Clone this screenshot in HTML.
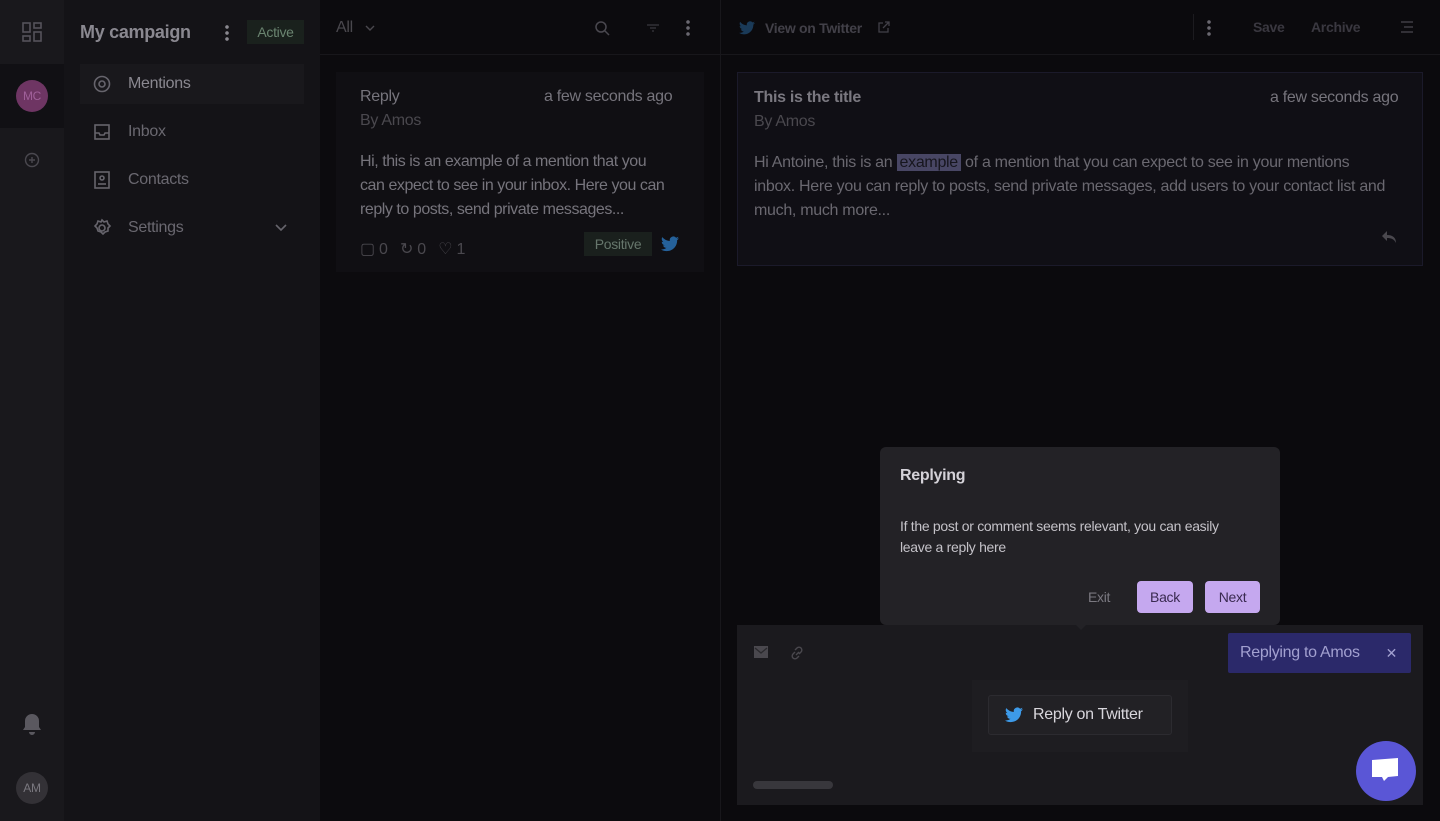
<!DOCTYPE html><html><head><style>
*{box-sizing:border-box;margin:0;padding:0}
body{width:1440px;height:821px;overflow:hidden;background:#0b0a0d;font-family:"Liberation Sans",sans-serif;position:relative;color:#8a8890;letter-spacing:-0.3px}
.a{position:absolute;white-space:nowrap}
.w{white-space:normal}
</style></head><body>
<div class="a" style="left:0;top:0;width:64px;height:821px;background:#19181c"></div>
<div class="a" style="left:0;top:64px;width:64px;height:64px;background:#111014"></div>
<svg class="a" style="left:22px;top:22px" width="20" height="20" viewBox="0 0 20 20" fill="none" stroke="#55535a" stroke-width="1.6"><rect x="1" y="1" width="7" height="9"/><rect x="12" y="1" width="7" height="5"/><rect x="1" y="14" width="7" height="5"/><rect x="12" y="10" width="7" height="9"/></svg>
<div class="a" style="left:16px;top:80px;width:32px;height:32px;border-radius:50%;background:#6e3563;color:#a0609a;font-size:12px;line-height:32px;text-align:center">MC</div>
<svg class="a" style="left:24px;top:152px" width="16" height="16" viewBox="0 0 16 16" fill="none" stroke="#4a484f" stroke-width="1.4"><circle cx="8" cy="8" r="6.5"/><path d="M8 5v6M5 8h6"/></svg>
<svg class="a" style="left:21px;top:713px" width="22" height="24" viewBox="0 0 22 24" fill="#5a585f"><path d="M11 1a7 7 0 0 0-7 7v6l-2 3h18l-2-3V8a7 7 0 0 0-7-7zM8 19a3 3 0 0 0 6 0z"/></svg>
<div class="a" style="left:16px;top:772px;width:32px;height:32px;border-radius:50%;background:#333136;color:#7a787f;font-size:12px;line-height:32px;text-align:center">AM</div>

<div class="a" style="left:64px;top:0;width:256px;height:821px;background:#141317"></div>
<div class="a" style="left:80px;top:22px;font-size:18px;font-weight:bold;color:#8a8890">My campaign</div>
<div class="a" style="left:225px;top:24px;width:4px;height:18px;background:radial-gradient(circle,#8a888f 1.6px,transparent 2px) 0 0/4px 6px"></div>
<div class="a" style="left:247px;top:20px;width:57px;height:24px;background:#1a211d;color:#6a8470;font-size:14px;line-height:24px;text-align:center">Active</div>
<div class="a" style="left:80px;top:64px;width:224px;height:40px;background:#19181c"></div>
<div class="a" style="left:128px;top:75px;font-size:16px;color:#8a8890">Mentions</div>
<div class="a" style="left:128px;top:123px;font-size:16px;color:#6a6870">Inbox</div>
<div class="a" style="left:128px;top:171px;font-size:16px;color:#6a6870">Contacts</div>
<div class="a" style="left:128px;top:219px;font-size:16px;color:#6a6870">Settings</div>
<svg class="a" style="left:92px;top:75px" width="200" height="170" fill="none" stroke="#66646c" stroke-width="1.6"><circle cx="10" cy="9" r="7.5"/><circle cx="10" cy="9" r="3"/><rect x="3" y="50" width="14" height="14"/><path d="M3 58h4l1 2h4l1-2h4"/><rect x="3" y="97" width="14" height="16"/><circle cx="10" cy="103" r="2"/><path d="M6 109h8"/><circle cx="10" cy="153" r="3"/><path d="M10 145l2 2 3-1 1 3 2 2-2 2 0 3-3 1-2 2-2-2-3-1-1-3-2-2 2-2 1-3 3 1z"/><path d="M184 150l5 5 5-5"/></svg>

<div class="a" style="left:320px;top:0;width:400px;height:821px;background:#0c0b0e"></div>
<div class="a" style="left:320px;top:54px;width:400px;height:1px;background:#18171b"></div>
<div class="a" style="left:336px;top:19px;font-size:16px;color:#4a484e">All</div>
<svg class="a" style="left:365px;top:24px" width="10" height="8" fill="none" stroke="#4a484e" stroke-width="1.4"><path d="M1 2l4 4 4-4"/></svg>
<svg class="a" style="left:594px;top:20px" width="16" height="16" fill="none" stroke="#4a484f" stroke-width="1.5"><circle cx="7" cy="7" r="5"/><path d="M11 11l4 4"/></svg>
<svg class="a" style="left:646px;top:23px" width="14" height="10" fill="none" stroke="#3a383e" stroke-width="1.2"><path d="M1 2h12M4 5h6M6 8h2"/></svg>
<div class="a" style="left:686px;top:19px;width:4px;height:18px;background:radial-gradient(circle,#6a6870 1.6px,transparent 2px) 0 0/4px 6px"></div>
<div class="a" style="left:336px;top:72px;width:368px;height:200px;background:#100f13"></div>
<div class="a" style="left:360px;top:88px;font-size:16px;color:#76747c">Reply</div>
<div class="a" style="left:544px;top:88px;font-size:16px;color:#76747c">a few seconds ago</div>
<div class="a" style="left:360px;top:112px;font-size:16px;color:#4a484e">By Amos</div>
<div class="a w" style="left:360px;top:150px;width:308px;font-size:16px;line-height:24px;color:#76747c;letter-spacing:-0.45px">Hi, this is an example of a mention that you can expect to see in your inbox. Here you can reply to posts, send private messages...</div>
<div class="a" style="left:360px;top:239px;font-size:16px;color:#4a484e">▢ 0 &nbsp; ↻ 0 &nbsp; ♡ 1</div>
<div class="a" style="left:584px;top:232px;width:68px;height:24px;background:#1a201d;color:#66766c;font-size:14px;line-height:24px;text-align:center">Positive</div>
<svg class="a" style="left:661px;top:236px" width="18" height="16" viewBox="0 0 24 20"><path fill="#25619a" d="M24 2.3a10 10 0 0 1-2.8.8A5 5 0 0 0 23.3.4a10 10 0 0 1-3.1 1.2A4.9 4.9 0 0 0 11.8 6 14 14 0 0 1 1.7.9a4.9 4.9 0 0 0 1.5 6.6A4.9 4.9 0 0 1 1 6.9a4.9 4.9 0 0 0 3.9 4.8 5 5 0 0 1-2.2.1 4.9 4.9 0 0 0 4.6 3.4A9.9 9.9 0 0 1 0 17.3 14 14 0 0 0 7.5 19.5c9.1 0 14-7.5 14-14v-.6A10 10 0 0 0 24 2.3z"/></svg>

<div class="a" style="left:720px;top:0;width:1px;height:821px;background:#18171b"></div>
<div class="a" style="left:721px;top:54px;width:719px;height:1px;background:#18171b"></div>
<svg class="a" style="left:739px;top:21px" width="16" height="14" viewBox="0 0 24 20"><path fill="#1a3a58" d="M24 2.3a10 10 0 0 1-2.8.8A5 5 0 0 0 23.3.4a10 10 0 0 1-3.1 1.2A4.9 4.9 0 0 0 11.8 6 14 14 0 0 1 1.7.9a4.9 4.9 0 0 0 1.5 6.6A4.9 4.9 0 0 1 1 6.9a4.9 4.9 0 0 0 3.9 4.8 5 5 0 0 1-2.2.1 4.9 4.9 0 0 0 4.6 3.4A9.9 9.9 0 0 1 0 17.3 14 14 0 0 0 7.5 19.5c9.1 0 14-7.5 14-14v-.6A10 10 0 0 0 24 2.3z"/></svg>
<div class="a" style="left:765px;top:20px;font-size:14px;font-weight:bold;color:#424048">View on Twitter</div>
<svg class="a" style="left:878px;top:21px" width="12" height="12" fill="none" stroke="#424048" stroke-width="1.3"><path d="M5 2H1v9h9V7M7 1h4v4M11 1L5 7"/></svg>
<div class="a" style="left:1193px;top:14px;width:1px;height:26px;background:#1c1b1f"></div>
<div class="a" style="left:1207px;top:19px;width:4px;height:18px;background:radial-gradient(circle,#6a6870 1.6px,transparent 2px) 0 0/4px 6px"></div>
<div class="a" style="left:1253px;top:19px;font-size:14px;font-weight:bold;color:#3a3840">Save</div>
<div class="a" style="left:1311px;top:19px;font-size:14px;font-weight:bold;color:#3a3840">Archive</div>
<svg class="a" style="left:1401px;top:21px" width="12" height="12" fill="none" stroke="#4a484f" stroke-width="1.2"><path d="M0 1h12M3 6h9M0 11h12"/></svg>
<div class="a" style="left:737px;top:72px;width:686px;height:194px;background:#100f15;border:1px solid #1b1a2a"></div>
<div class="a" style="left:754px;top:89px;font-size:16px;font-weight:bold;color:#7a7880">This is the title</div>
<div class="a" style="left:1270px;top:89px;font-size:16px;color:#76747c">a few seconds ago</div>
<div class="a" style="left:754px;top:113px;font-size:16px;color:#4a484e">By Amos</div>
<div class="a w" style="left:754px;top:151px;width:640px;font-size:16px;line-height:24px;color:#6a6870;letter-spacing:-0.3px">Hi Antoine, this is an <span style="background:#484664;color:#17161e;padding:0 3px">example</span> of a mention that you can expect to see in your mentions inbox. Here you can reply to posts, send private messages, add users to your contact list and much, much more...</div>
<svg class="a" style="left:1381px;top:230px" width="16" height="14" viewBox="0 0 16 14"><path fill="#4a484e" d="M6 1L1 6l5 5V8c4 0 7 1 9 5 0-5-3-8-9-8z"/></svg>

<div class="a" style="left:737px;top:625px;width:686px;height:180px;background:#1b1a1e"></div>
<svg class="a" style="left:754px;top:646px" width="14" height="12"><rect width="14" height="12" fill="#4a484e"/><path d="M1 2l6 5 6-5" fill="none" stroke="#2a292d" stroke-width="1.3"/></svg>
<svg class="a" style="left:790px;top:645px" width="14" height="16" fill="none" stroke="#4a484e" stroke-width="1.4"><path d="M6 10l3-3M5 7l-2 2a2.5 2.5 0 0 0 4 4l2-2M9 9l2-2a2.5 2.5 0 0 0-4-4L5 5"/></svg>
<div class="a" style="left:1228px;top:633px;width:183px;height:40px;background:#2b296a;border-radius:2px;color:#a2a0d0;font-size:16px;line-height:40px;padding-left:12px">Replying to Amos<span style="position:absolute;right:14px;font-size:14px">✕</span></div>
<div class="a" style="left:972px;top:680px;width:216px;height:72px;background:#1e1d21"></div>
<div class="a" style="left:988px;top:695px;width:184px;height:40px;background:#222125;border:1px solid #2c2b30;border-radius:3px;color:#d8d6dc;font-size:16px;line-height:38px;padding-left:44px">Reply on Twitter</div>
<svg class="a" style="left:1005px;top:707px" width="18" height="16" viewBox="0 0 24 20"><path fill="#3d9ae8" d="M24 2.3a10 10 0 0 1-2.8.8A5 5 0 0 0 23.3.4a10 10 0 0 1-3.1 1.2A4.9 4.9 0 0 0 11.8 6 14 14 0 0 1 1.7.9a4.9 4.9 0 0 0 1.5 6.6A4.9 4.9 0 0 1 1 6.9a4.9 4.9 0 0 0 3.9 4.8 5 5 0 0 1-2.2.1 4.9 4.9 0 0 0 4.6 3.4A9.9 9.9 0 0 1 0 17.3 14 14 0 0 0 7.5 19.5c9.1 0 14-7.5 14-14v-.6A10 10 0 0 0 24 2.3z"/></svg>
<div class="a" style="left:753px;top:781px;width:80px;height:8px;border-radius:4px;background:#38373c"></div>

<div class="a" style="left:880px;top:447px;width:400px;height:178px;background:#232226;border-radius:6px"></div>
<div class="a" style="left:1073px;top:622px;width:0;height:0;border:8px solid transparent;border-top-color:#232226"></div>
<div class="a" style="left:900px;top:467px;font-size:16px;font-weight:bold;color:#d4d2d8">Replying</div>
<div class="a w" style="left:900px;top:516px;width:350px;font-size:14px;line-height:21px;color:#c4c2c8">If the post or comment seems relevant, you can easily leave a reply here</div>
<div class="a" style="left:1088px;top:589px;font-size:14px;color:#7a7880">Exit</div>
<div class="a" style="left:1137px;top:581px;width:56px;height:32px;background:#c5a8ef;border-radius:4px;color:#3a2a50;font-size:14px;line-height:32px;text-align:center">Back</div>
<div class="a" style="left:1205px;top:581px;width:55px;height:32px;background:#c5a8ef;border-radius:4px;color:#3a2a50;font-size:14px;line-height:32px;text-align:center">Next</div>

<div class="a" style="left:1356px;top:741px;width:60px;height:60px;border-radius:50%;background:#5a56d6"></div>
<svg class="a" style="left:1370px;top:757px" width="32" height="30" viewBox="0 0 32 30"><path fill="#fff" d="M2 3l26-2v18l-10 1-4 4-2-4-10 0z"/></svg>
</body></html>
